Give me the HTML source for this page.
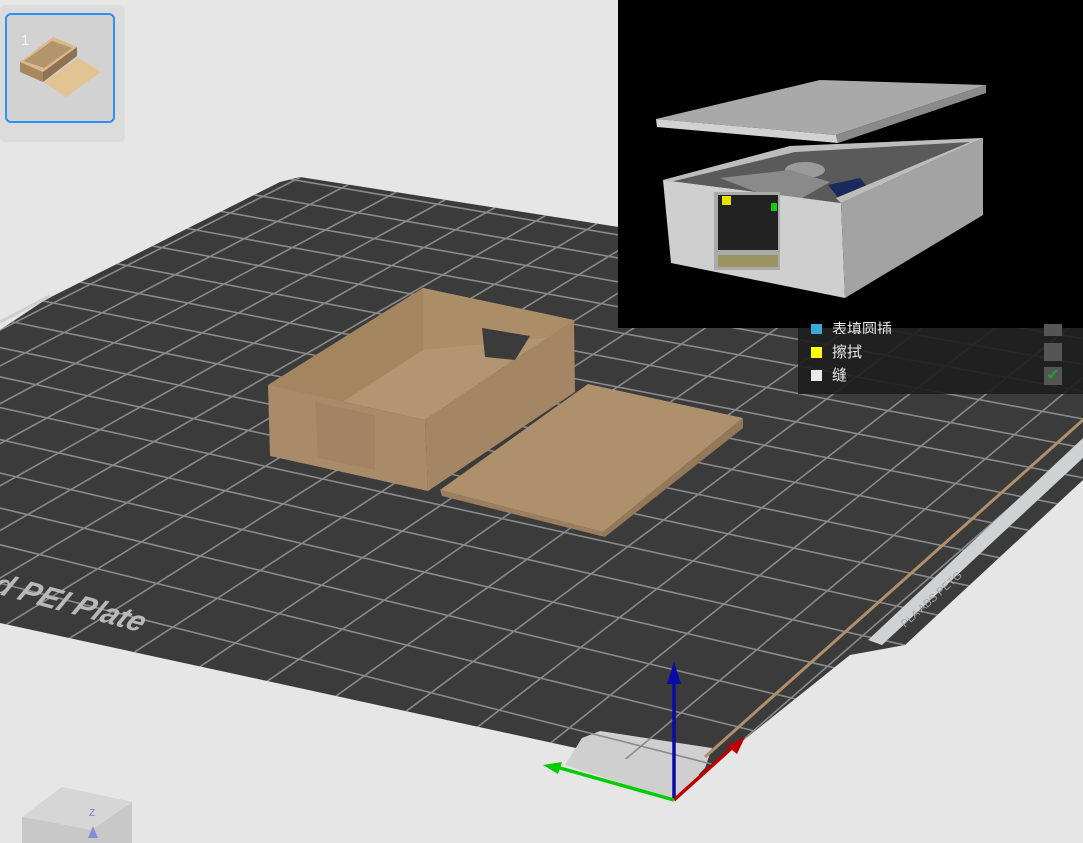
<!DOCTYPE html>
<html><head><meta charset="utf-8"><style>
html,body{margin:0;padding:0;width:1083px;height:843px;overflow:hidden;background:#e6e6e6;font-family:"Liberation Sans","Noto Sans CJK SC",sans-serif}
svg{position:absolute;left:0;top:0}
.legend{position:absolute;left:798px;top:328px;width:285px;height:66px;background:rgba(30,30,30,0.93);color:#e8e8e8;font-size:15px}
.row{position:absolute;left:13px;height:20px;line-height:20px}
.sw{display:inline-block;width:11px;height:11px;margin-right:10px;vertical-align:-1px}
.cb{position:absolute;left:246px;width:18px;height:18px;background:#555}
</style></head><body>
<svg id="s" width="1083" height="843" viewBox="0 0 1083 843">
<defs><clipPath id="pc"><polygon points="0,330 45,300 280,182 300,177 1083,300 1083,480 905,645 850,655 700,775 0,623"/></clipPath></defs>
<polygon points="0,330 45,300 280,182 300,177 1083,300 1083,480 905,645 850,655 700,775 0,623" fill="#3a3b3a"/>
<polygon points="565,765 582,738 600,731 712,748 705,768 674,800" fill="#cfcfcf"/>
<g id="grid" clip-path="url(#pc)" stroke="#8a8a8a" stroke-width="1.6"></g>
<path d="M0,322 L50,296" stroke="#cfcfcf" stroke-width="3"/>
<polygon points="868,640 1083,438 1083,458 882,645" fill="#cfd2d2"/>
<line x1="705" y1="757" x2="1083" y2="420" stroke="#b0906b" stroke-width="3"/>
<text x="0" y="0" transform="translate(-10,592) rotate(15) skewX(-15)" fill="#b9b9b9" font-size="30" font-weight="bold" font-style="italic">d PEI Plate</text>
<text x="0" y="0" transform="translate(905,628) rotate(-42)" fill="#a5a8a8" font-size="11">PLA ABS PETG</text>
<!-- box -->
<polygon points="268,385 423,288 574,320 425,420" fill="#b39572"/>
<polygon points="268,385 423,288 423,350 330,410" fill="#a3865f"/>
<polygon points="423,288 574,320 574,335 423,350" fill="#ab8d68"/>
<polygon points="482,328 530,336 515,360 485,357" fill="#3a3b3a"/>
<polygon points="268,385 425,420 428,491 270,456" fill="#a98b69"/>
<polygon points="315,402 375,415 375,470 318,458" fill="#a28464"/>
<polygon points="425,420 574,320 575,392 428,491" fill="#a48664"/>
<!-- lid -->
<polygon points="440,490 588,384 743,418 603,532" fill="#ae906c"/>
<polygon points="440,490 603,532 605,537 442,496" fill="#9b7e5d"/>
<polygon points="603,532 743,418 743,428 605,537" fill="#94785a"/>
<!-- axes -->
<line x1="674" y1="800" x2="674" y2="680" stroke="#0a0aa8" stroke-width="3.5"/>
<polygon points="667,684 674,662 681,684" fill="#0a0aa8"/>
<line x1="674" y1="800" x2="735" y2="745" stroke="#b00" stroke-width="3.5"/>
<polygon points="727,746 745,737 737,754" fill="#b00"/>
<line x1="674" y1="800" x2="560" y2="768" stroke="#0c0" stroke-width="3.5"/>
<polygon points="562,762 543,765 558,774" fill="#0c0"/>
<!-- view cube -->
<polygon points="22,817 62,787 132,802 132,843 22,843" fill="#c8c8c8"/>
<polygon points="22,817 62,787 132,802 92,830" fill="#d6d6d6"/>
<text x="89" y="816" fill="#7b7bd6" font-size="10">Z</text>
<polygon points="88,838 93,826 98,838" fill="#8a8ad8"/>
<!-- inset -->
<rect x="618" y="0" width="465" height="328" fill="#000"/>
<polygon points="663,180 790,146 983,138 841,203" fill="#5a5a5a"/>
<ellipse cx="805" cy="170" rx="20" ry="8" fill="#9a9a9a"/>
<polygon points="720,178 790,170 830,182 790,205" fill="#8a8a8a"/>
<polygon points="828,185 860,178 870,190 840,200" fill="#1a2a5a"/>
<polygon points="663,180 841,203 845,298 671,263" fill="#cfcfcf"/>
<polygon points="841,203 983,138 983,215 845,298" fill="#a3a3a3"/>
<polygon points="663,180 790,146 983,138 841,203 836,198 970,142 795,152 670,182" fill="#bdbdbd"/>
<rect x="714" y="192" width="66" height="78" fill="#aaa"/>
<rect x="718" y="195" width="60" height="55" fill="#222"/>
<rect x="722" y="196" width="9" height="9" fill="#e8e000"/>
<rect x="771" y="203" width="6" height="8" fill="#1c1"/>
<rect x="718" y="255" width="60" height="12" fill="#9a9460"/>
<polygon points="656,119 820,80 986,85 836,135" fill="#a9a9a9"/>
<polygon points="656,119 836,135 838,143 657,127" fill="#d2d2d2"/>
<polygon points="836,135 986,85 986,93 838,143" fill="#8a8a8a"/>
<!-- thumbnail panel -->
<rect x="0" y="5" width="125" height="137" rx="5" fill="#dcdcdc"/>
<rect x="6" y="14" width="108" height="108" rx="5" fill="#d2d2d2" stroke="#2d90f0" stroke-width="2"/>
<text x="21" y="45" fill="#f4f4f4" font-size="15">1</text>
<polygon points="20,62 53,37 77,47 43,72" fill="#d9b98a"/>
<polygon points="24,61 52,41 72,48 44,68" fill="#b4946c"/>
<polygon points="20,62 43,72 43,82 20,72" fill="#a78660"/>
<polygon points="43,72 77,47 77,56 43,82" fill="#8f7253"/>
<polygon points="44,82 78,58 101,72 66,97" fill="#e2c392"/>
</svg>
<div class="legend">
<div class="row" style="top:-8px;overflow:hidden;height:14px"><span class="sw" style="background:#3aa8d8"></span>表填圆插</div>
<div class="cb" style="top:-4px;height:12px"></div>
<div class="row" style="top:15px"><span class="sw" style="background:#ffff00"></span>擦拭</div>
<div class="cb" style="top:15px"></div>
<div class="row" style="top:38px"><span class="sw" style="background:#eaeaea"></span>缝</div>
<div class="cb" style="top:39px;color:#1c9f3a;font-size:16px;line-height:18px;text-align:center">✔</div>
</div>
<script>
(function(){
var P=[[674,800],[1208,335],[295,180],[-381,524]];
var x0=P[0][0],y0=P[0][1],x1=P[1][0],y1=P[1][1],x2=P[2][0],y2=P[2][1],x3=P[3][0],y3=P[3][1];
var dx1=x1-x2,dx2=x3-x2,dx3=x0-x1+x2-x3,dy1=y1-y2,dy2=y3-y2,dy3=y0-y1+y2-y3;
var den=dx1*dy2-dx2*dy1;
var g=(dx3*dy2-dx2*dy3)/den,h=(dx1*dy3-dx3*dy1)/den;
var a=x1-x0+g*x1,b=x3-x0+h*x3,c=x0,d=y1-y0+g*y1,e=y3-y0+h*y3,f=y0;
function m(u,v){var w=g*u+h*v+1;return [(a*u+b*v+c)/w,(d*u+e*v+f)/w];}
var G=document.getElementById('grid'),N=17,s='';
for(var i=0;i<=N;i++){var t=i/N;
var p=m(t,-0.05),q=m(t,1.05);s+='M'+p[0].toFixed(1)+','+p[1].toFixed(1)+'L'+q[0].toFixed(1)+','+q[1].toFixed(1);
p=m(-0.05,t);q=m(1.05,t);s+='M'+p[0].toFixed(1)+','+p[1].toFixed(1)+'L'+q[0].toFixed(1)+','+q[1].toFixed(1);}
var pa=document.createElementNS('http://www.w3.org/2000/svg','path');pa.setAttribute('d',s);pa.setAttribute('fill','none');G.appendChild(pa);
})();
</script>
</body></html>
